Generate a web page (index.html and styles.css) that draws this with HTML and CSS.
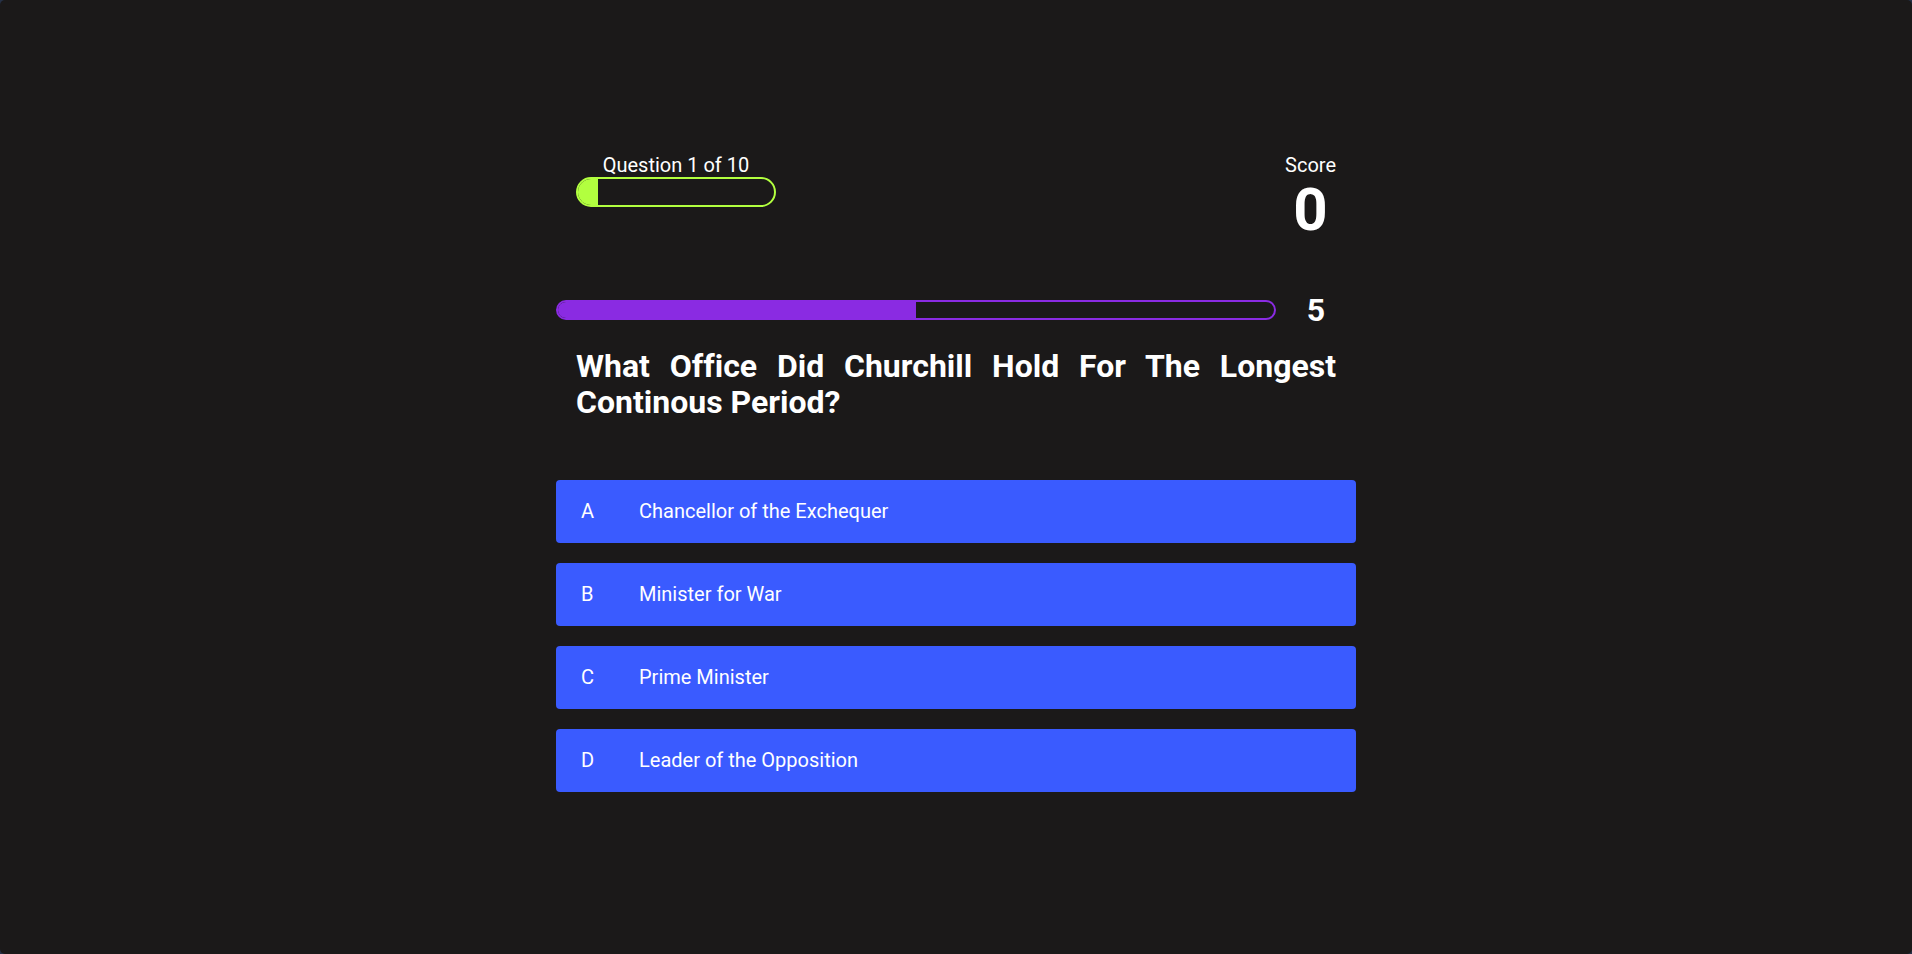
FILE: index.html
```
<!DOCTYPE html>
<html lang="en">
<head>
  <meta charset="UTF-8">
  <meta name="viewport" content="width=device-width, initial-scale=1.0">
  <title>Quiz</title>
  <link rel="stylesheet" href="styles.css">
</head>
<body>
  <main class="page">
    <div class="game">
      <div class="hud">
        <div class="hud-item">
          <p class="hud-prefix" id="progressText">Question 1 of 10</p>
          <div class="progress-bar" role="progressbar" aria-labelledby="progressText" aria-valuenow="1" aria-valuemin="0" aria-valuemax="10">
            <div class="progress-fill" style="width: 10%"></div>
          </div>
        </div>
        <div class="hud-item">
          <p class="hud-prefix">Score</p>
          <p class="score" id="score">0</p>
        </div>
      </div>

      <div class="timer">
        <div class="timer-bar" role="progressbar" aria-label="Time left" aria-valuenow="5" aria-valuemin="0" aria-valuemax="10">
          <div class="timer-fill" style="width: 50%"></div>
        </div>
        <span class="timer-count" id="count">5</span>
      </div>

      <h1 class="question" id="question">What office did Churchill hold for the longest continous period?</h1>

      <div class="choices">
        <button class="choice" type="button">
          <span class="choice-prefix">A</span>
          <span class="choice-text">Chancellor of the Exchequer</span>
        </button>
        <button class="choice" type="button">
          <span class="choice-prefix">B</span>
          <span class="choice-text">Minister for War</span>
        </button>
        <button class="choice" type="button">
          <span class="choice-prefix">C</span>
          <span class="choice-text">Prime Minister</span>
        </button>
        <button class="choice" type="button">
          <span class="choice-prefix">D</span>
          <span class="choice-text">Leader of the Opposition</span>
        </button>
      </div>
    </div>
  </main>
</body>
</html>
```
FILE: styles.css
```
* {
  box-sizing: border-box;
  margin: 0;
  padding: 0;
}

html {
  background-color: #263147;
}

body {
  color: white;
  font-family: Roboto, "Open Sans", sans-serif;
  font-size: 20px;
  font-variant-ligatures: none;
}

.page {
  min-height: 100vh;
  display: flex;
  justify-content: center;
  align-items: center;
  background-color: #1b1919;
  border-radius: 5px;
}

.game {
  width: 100%;
  max-width: 800px;
  padding: 10px 0 20px;
}

/* question counter and score */
.hud {
  display: flex;
  justify-content: space-between;
  padding: 0 20px;
}

.hud-item {
  text-align: center;
}

.hud-prefix {
  line-height: 24px;
}

.progress-bar {
  width: 200px;
  height: 30px;
  border: 2px solid #b2ff3f;
  border-radius: 50px;
  overflow: hidden;
}

.progress-fill {
  height: 100%;
  background-color: #b2ff3f;
}

.score {
  font-size: 60px;
  font-weight: bold;
  line-height: 65px;
}

/* countdown */
.timer {
  display: flex;
  align-items: center;
  margin-top: 50px;
}

.timer-bar {
  flex: 1;
  height: 20px;
  border: 2px solid #8a2be2;
  border-radius: 50px;
  overflow: hidden;
}

.timer-fill {
  height: 100%;
  background-color: #8a2be2;
}

.timer-count {
  width: 80px;
  font-size: 32px;
  font-weight: bold;
  line-height: 36px;
  text-align: center;
}

.question {
  margin-top: 20px;
  padding: 0 20px;
  font-size: 32px;
  line-height: 36px;
  text-align: justify;
  text-transform: capitalize;
}

.choices {
  display: flex;
  flex-direction: column;
  gap: 20px;
  margin-top: 60px;
}

.choice {
  display: flex;
  align-items: center;
  width: 100%;
  min-height: 63px;
  padding: 0 25px;
  border: none;
  border-radius: 4px;
  background-color: #3a5bff;
  color: white;
  font-family: inherit;
  font-size: 20px;
  text-align: left;
  cursor: pointer;
}

.choice:hover {
  background-color: #5a76ff;
}

.choice-prefix {
  width: 58px;
}
```
